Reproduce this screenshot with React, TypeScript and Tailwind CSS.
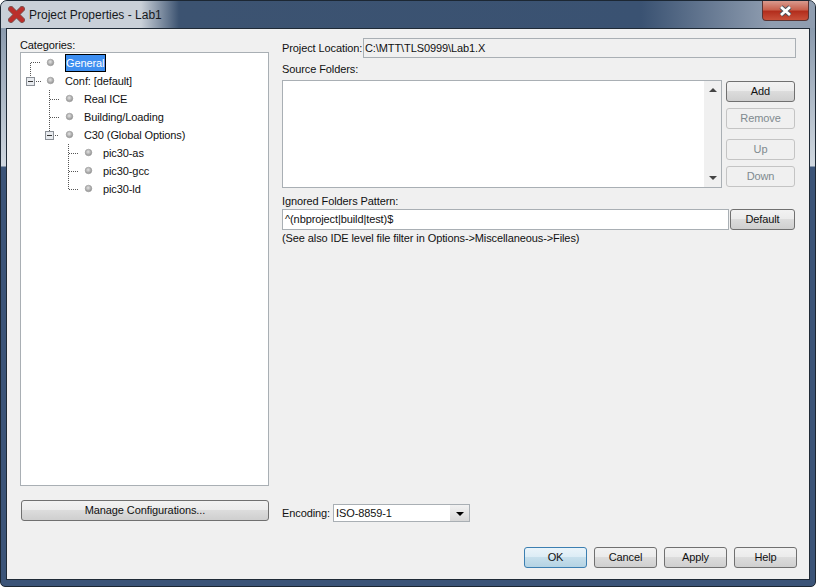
import type { ReactNode } from "react";

const treeRows = [
  { label: "General", indent: 65, selected: true },
  { label: "Conf: [default]", indent: 65 },
  { label: "Real ICE", indent: 84 },
  { label: "Building/Loading", indent: 84 },
  { label: "C30 (Global Options)", indent: 84 },
  { label: "pic30-as", indent: 103 },
  { label: "pic30-gcc", indent: 103 },
  { label: "pic30-ld", indent: 103 },
];

const nodeDots = [
  [29.5, 9.5],
  [29.5, 27.5],
  [48.5, 45.5],
  [48.5, 63.5],
  [48.5, 81.5],
  [67.5, 99.5],
  [67.5, 117.5],
  [67.5, 135.5],
];

function Btn({ children, className = "", disabled = false }: { children: ReactNode; className?: string; disabled?: boolean }) {
  return (
    <button
      className={`flex h-[21px] items-center justify-center rounded-[3px] border ${
        disabled
          ? "border-[#c4c4c4] bg-[#f0f0f0] text-[#7f8a8f]"
          : "border-[#707070] bg-[linear-gradient(#f2f2f2_0%,#ebebeb_48%,#dcdcdc_50%,#cfcfcf_100%)] text-[#111]"
      } ${className}`}
    >
      {children}
    </button>
  );
}

function TreeLines() {
  return (
    <svg className="absolute top-0 left-0" width="248" height="150" fill="none">
      <defs>
        <radialGradient id="node" cx="45%" cy="40%" r="60%">
          <stop offset="0%" stopColor="#e4e4e4" />
          <stop offset="100%" stopColor="#8f8f8f" />
        </radialGradient>
      </defs>
      <g stroke="#555" strokeDasharray="1 1">
        <path d="M10 9.5H19M9.5 10V24M15 28.5H20" />
        <path d="M28.5 37V78M29 46.5H38M29 64.5H38M34 82.5H38" />
        <path d="M47.5 91V137M48 100.5H58M48 118.5H58M48 136.5H58" />
      </g>
      <g stroke="#8a8f96" fill="#e8ebef">
        <rect x="5.5" y="24.5" width="8" height="8" />
        <rect x="24.5" y="78.5" width="8" height="8" />
      </g>
      <path d="M7 28.5H12M26 82.5H31" stroke="#333" />
      {nodeDots.map(([x, y]) => (
        <circle key={`${x}-${y}`} cx={x} cy={y} r="3.3" fill="url(#node)" stroke="#9a9a9a" strokeWidth="0.6" />
      ))}
    </svg>
  );
}

export default function App() {
  return (
    <div className="flex h-[587px] w-[816px] flex-col overflow-hidden rounded-t-[7px] rounded-b-[5px] border border-[#1c2733] bg-[linear-gradient(180deg,#7d8ea3_0px,#d0d8e0_165px,#3b5478_166px,#3b5478_100%)] font-['Liberation_Sans',sans-serif] text-[11px] leading-none tracking-[-0.1px] text-[#111]">
      {/* Title bar */}
      <div className="flex h-[27px] shrink-0 items-center bg-[linear-gradient(90deg,#c9d0d8_0px,#c9d0d8_140px,#3c5371_178px,#3a5272_640px,#8f9db0_770px)] pr-[6px] pl-[7px]">
        <svg width="17" height="17" viewBox="0 0 17 17">
          <path d="M3 3 14 14M14 3 3 14" stroke="#7d5a58" strokeWidth="6" strokeLinecap="round" />
          <path d="M3 3 14 14M14 3 3 14" stroke="#bb2f2b" strokeWidth="4.4" strokeLinecap="round" />
        </svg>
        <span className="ml-[4px] text-[12px] tracking-normal text-[#16191c]">Project Properties - Lab1</span>
        <div className="ml-auto flex h-[20px] w-[47px] items-center justify-center self-start rounded-b-[4px] border border-t-0 border-[#5a3433] bg-[linear-gradient(#d99a8e_0%,#c8624f_45%,#b32e1d_55%,#c8503a_100%)]">
          <svg width="15" height="12" viewBox="0 0 15 12">
            <path d="M3 2 12 10M12 2 3 10" stroke="#47525c" strokeWidth="4.6" />
            <path d="M3 2 12 10M12 2 3 10" stroke="#fff" strokeWidth="2.8" />
          </svg>
        </div>
      </div>

      {/* Dialog body */}
      <div className="mx-[5px] mb-[6px] flex min-h-0 flex-1 flex-col border border-[#1f2a36] bg-[#f0f0f0] pt-[9px] pr-[12px] pb-[11px] pl-[13px]">
        <div className="flex min-h-0 flex-1 gap-[13px]">
          {/* Categories */}
          <div className="flex w-[249px] shrink-0 flex-col">
            <div className="h-[14px] pt-[2px]">Categories:</div>
            <div className="relative h-[434px] border border-[#a9afb4] bg-white pt-[1px]">
              <TreeLines />
              {treeRows.map((r) => (
                <div key={r.label} className="relative flex h-[18px] items-center" style={{ paddingLeft: r.indent - 21 }}>
                  <span className={r.selected ? "flex h-[18px] items-center border border-black bg-[#3d8ef0] pr-[1px] text-white" : ""}>{r.label}</span>
                </div>
              ))}
            </div>
            <Btn className="mt-[14px] ml-px w-[248px]">Manage Configurations...</Btn>
          </div>

          {/* Sources panel */}
          <div className="flex min-w-0 flex-1 flex-col pr-px">
            <div className="flex h-[20px] items-center">
              <span className="w-[81px] shrink-0 whitespace-nowrap">Project Location:</span>
              <div className="flex h-full flex-1 items-center border border-[#a9afb4] bg-[#f0f0f0] pl-px">C:\MTT\TLS0999\Lab1.X</div>
            </div>
            <div className="mt-[5px] h-[17px] pt-px">Source Folders:</div>
            <div className="flex gap-[4px]">
              <div className="flex h-[108px] w-[440px] justify-end border border-[#a9afb4] bg-white">
                <div className="flex w-[17px] flex-col items-center justify-between bg-[#f0f0f0] py-[7px]">
                  <span className="h-0 w-0 border-x-[4px] border-b-[4px] border-x-transparent border-b-[#444]" />
                  <span className="h-0 w-0 border-x-[4px] border-t-[4px] border-x-transparent border-t-[#444]" />
                </div>
              </div>
              <div className="flex w-[69px] flex-col pt-px">
                <Btn>Add</Btn>
                <Btn disabled className="mt-[6px]">Remove</Btn>
                <Btn disabled className="mt-[10px]">Up</Btn>
                <Btn disabled className="mt-[6px]">Down</Btn>
              </div>
            </div>
            <div className="mt-[7px] h-[14px] pt-px">Ignored Folders Pattern:</div>
            <div className="flex h-[21px] gap-px">
              <div className="flex w-[447px] items-center border border-[#a9afb4] bg-white pl-[2px]">^(nbproject|build|test)$</div>
              <Btn className="w-[65px]">Default</Btn>
            </div>
            <div className="mt-[3px]">(See also IDE level file filter in Options-&gt;Miscellaneous-&gt;Files)</div>
            <div className="mt-auto flex h-[18px] items-center">
              <span className="w-[51px] shrink-0 whitespace-nowrap">Encoding:</span>
              <div className="flex h-full w-[137px] items-center justify-between border border-[#a9afb4] bg-white pl-[2px]">
                ISO-8859-1
                <span className="flex h-full w-[19px] items-center justify-center bg-[linear-gradient(#f2f2f2,#d8d8d8)]">
                  <span className="mt-[2px] h-0 w-0 border-x-[4px] border-t-[4px] border-x-transparent border-t-black" />
                </span>
              </div>
            </div>
          </div>
        </div>

        {/* Dialog buttons */}
        <div className="mt-[25px] flex justify-end gap-[7px]">
          <Btn className="w-[63px] !border-[#3c7fb1] !bg-[linear-gradient(#eaf4fa,#dcecf5_48%,#c6dfec_50%,#b5d3e3)]">OK</Btn>
          <Btn className="w-[63px]">Cancel</Btn>
          <Btn className="w-[63px]">Apply</Btn>
          <Btn className="w-[63px]">Help</Btn>
        </div>
      </div>
    </div>
  );
}
